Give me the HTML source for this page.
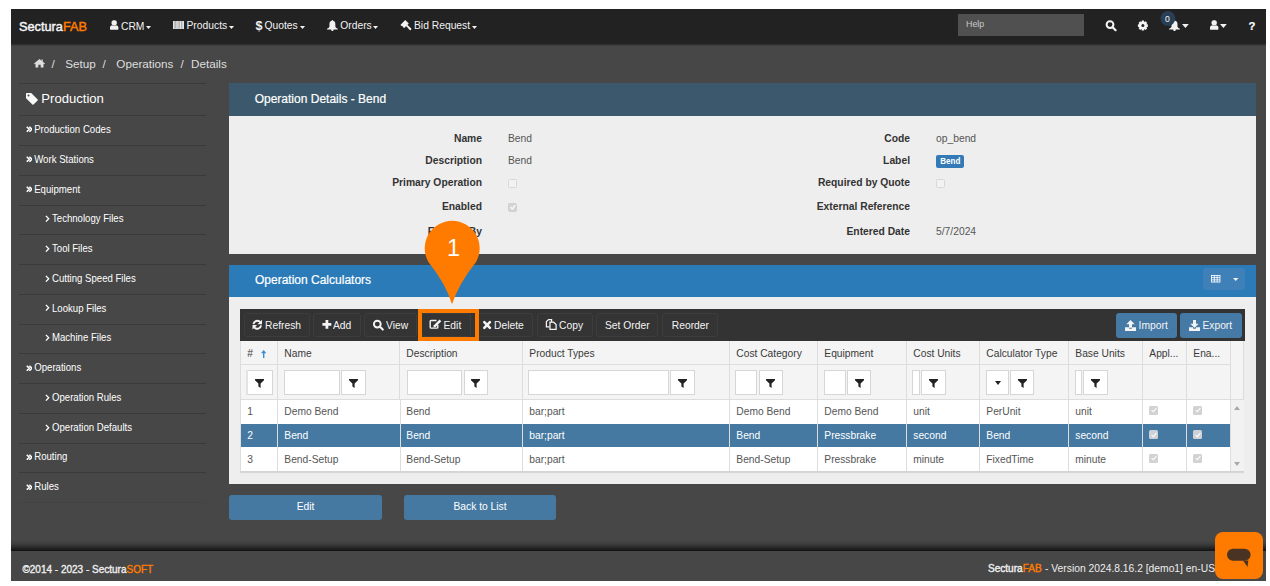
<!DOCTYPE html><html><head><meta charset="utf-8"><style>*{box-sizing:border-box;margin:0;padding:0}
html,body{width:1270px;height:586px;overflow:hidden;background:#fff;font-family:"Liberation Sans",sans-serif}
.a{position:absolute}
.t{position:absolute;white-space:nowrap}
</style></head><body>
<div class="a" style="left:11px;top:9px;width:1255px;height:572px;background:#474747;"></div>
<div class="a" style="left:11px;top:9px;width:1255px;height:35px;background:#222;"></div>
<div class="a" style="left:11px;top:44px;width:1255px;height:2px;background:linear-gradient(#2c2c2c,#424242);"></div>
<div class="t" style="left:19.00px;transform:scaleY(1.03);transform-origin:0 10px;-webkit-text-stroke:0.45px #f4f4f4;top:21px;font-size:12.75px;line-height:12.75px;color:#f4f4f4;">Sectura<span style="color:#ff7b00;-webkit-text-stroke:0.45px #ff7b00">FAB</span></div>
<svg class="a" style="left:110.1px;top:20.4px;" width="10" height="11" viewBox="0 0 10 11"><path d="M0 8.9V7.8Q0 5.3 2.6 5.3H5.8Q8.4 5.3 8.4 7.8V8.9Q8.4 9.8 7.4 9.8H1Q0 9.8 0 8.9Z" fill="#f2f2f2"/><circle cx="4.2" cy="2.8" r="3.05" fill="#555"/><circle cx="4.2" cy="2.8" r="2.6" fill="#f2f2f2"/></svg>
<div class="t" style="left:121.00px;top:22px;font-size:10.3px;line-height:10.3px;color:#f2f2f2;">CRM</div>
<svg class="a" style="left:145.5px;top:25.8px;" width="5" height="3" viewBox="0 0 5 3"><path d="M0 0H5L2.5 3Z" fill="#f2f2f2"/></svg>
<svg class="a" style="left:172.9px;top:20.8px;" width="11.2" height="8.6" viewBox="0 0 11.2 8.6"><rect width="11.2" height="8.6" fill="#cfcfcf"/><g fill="#a9a9a9"><rect x="1.6" width="1.2" height="7.4"/><rect x="5.8" width=".9" height="7.4"/><rect x="8.2" width=".8" height="7.4"/></g><g fill="#e4e4e4"><rect x="0" width="1" height="8.6"/><rect x="7" width="1" height="8.6"/><rect x="10" width="1.2" height="8.6"/></g></svg>
<div class="t" style="left:186.50px;top:21px;font-size:10.3px;line-height:10.3px;color:#f2f2f2;">Products</div>
<svg class="a" style="left:229px;top:25.6px;" width="5" height="3" viewBox="0 0 5 3"><path d="M0 0H5L2.5 3Z" fill="#f2f2f2"/></svg>
<div class="t" style="left:255.40px;transform:scaleY(1.08);transform-origin:0 10px;top:20px;font-size:12.6px;line-height:12.6px;color:#f2f2f2;font-weight:bold;">$</div>
<div class="t" style="left:264.50px;top:21px;font-size:10.3px;line-height:10.3px;color:#f2f2f2;">Quotes</div>
<svg class="a" style="left:300px;top:25.6px;" width="5" height="3" viewBox="0 0 5 3"><path d="M0 0H5L2.5 3Z" fill="#f2f2f2"/></svg>
<svg class="a" style="left:326.9px;top:19.7px;" width="10.8" height="11.3" viewBox="0 0 22 22.6"><path d="M11 0C10.2 0 9.6 .7 9.6 1.4C6.6 2 5 4.6 5 7.8V12.5C5 14.8 3 16.4 0 17.8V19.2H8.3C8.5 21 9.6 22.6 11 22.6C12.4 22.6 13.5 21 13.7 19.2H22V17.8C19 16.4 17 14.8 17 12.5V7.8C17 4.6 15.4 2 12.4 1.4C12.4 .7 11.8 0 11 0Z" fill="#f2f2f2"/></svg>
<div class="t" style="left:340.30px;top:21px;font-size:10.3px;line-height:10.3px;color:#f2f2f2;">Orders</div>
<svg class="a" style="left:373px;top:25.6px;" width="5" height="3" viewBox="0 0 5 3"><path d="M0 0H5L2.5 3Z" fill="#f2f2f2"/></svg>
<svg class="a" style="left:396px;top:16px;" width="20" height="18" viewBox="0 0 20 18"><g fill="#f2f2f2"><path d="M4.4 8.9L9.2 3.9L12.8 7.5L8 12.3L7.2 11.1Q6.6 10.3 5.7 10.1Z"/><path d="M9.6 9.6L11 8.4L15.3 12.6Q15.6 14.4 13.9 14.2Z"/></g></svg>
<div class="t" style="left:414.00px;top:21px;font-size:10.3px;line-height:10.3px;color:#f2f2f2;">Bid Request</div>
<svg class="a" style="left:472px;top:25.6px;" width="5" height="3" viewBox="0 0 5 3"><path d="M0 0H5L2.5 3Z" fill="#f2f2f2"/></svg>
<div class="a" style="left:958px;top:14px;width:126px;height:22px;background:#505050;"></div>
<div class="t" style="left:966.00px;top:20px;font-size:8.9px;line-height:8.9px;color:#c8c8c8;">Help</div>
<svg class="a" style="left:1100px;top:16px;" width="20" height="18" viewBox="0 0 20 18"><circle cx="10" cy="8.6" r="3.4" fill="none" stroke="#f5f5f5" stroke-width="2"/><path d="M12.6 11.2L15.6 14.2" stroke="#f5f5f5" stroke-width="2.2" stroke-linecap="round"/></svg>
<svg class="a" style="left:1136px;top:18px;" width="14" height="14" viewBox="0 0 14 14"><g fill="#f5f5f5" transform="translate(6.9 7.6)"><circle r="3.8"/><rect x="-1.3" y="-5" width="2.6" height="10" rx=".4"/><rect x="-1.3" y="-5" width="2.6" height="10" rx=".4" transform="rotate(45)"/><rect x="-1.3" y="-5" width="2.6" height="10" rx=".4" transform="rotate(90)"/><rect x="-1.3" y="-5" width="2.6" height="10" rx=".4" transform="rotate(135)"/><circle r="1.5" fill="#222"/></g></svg>
<svg class="a" style="left:1168.8px;top:19.8px;" width="11" height="11.2" viewBox="0 0 22 22.6"><path d="M11 0C10.2 0 9.6 .7 9.6 1.4C6.6 2 5 4.6 5 7.8V12.5C5 14.8 3 16.4 0 17.8V19.2H8.3C8.5 21 9.6 22.6 11 22.6C12.4 22.6 13.5 21 13.7 19.2H22V17.8C19 16.4 17 14.8 17 12.5V7.8C17 4.6 15.4 2 12.4 1.4C12.4 .7 11.8 0 11 0Z" fill="#f2f2f2"/></svg>
<svg class="a" style="left:1158px;top:9px;" width="20" height="20" viewBox="0 0 20 20"><circle cx="9.9" cy="9.4" r="7.4" fill="#283f56"/></svg>
<div class="t" style="left:1167.50px;transform:translateX(-50%) scaleY(1.12);transform-origin:50% 7px;top:15px;font-size:8.6px;line-height:8.6px;color:#f8f6ee;">0</div>
<svg class="a" style="left:1182.3px;top:23.8px;" width="6.8" height="3.9" viewBox="0 0 6.8 3.9"><path d="M0 0H6.8L3.4 3.9Z" fill="#f2f2f2"/></svg>
<svg class="a" style="left:1210.1px;top:20.3px;" width="10" height="11" viewBox="0 0 10 11"><path d="M0 8.9V7.8Q0 5.3 2.6 5.3H5.8Q8.4 5.3 8.4 7.8V8.9Q8.4 9.8 7.4 9.8H1Q0 9.8 0 8.9Z" fill="#f2f2f2"/><circle cx="4.2" cy="2.8" r="3.05" fill="#555"/><circle cx="4.2" cy="2.8" r="2.6" fill="#f2f2f2"/></svg>
<svg class="a" style="left:1220.4px;top:23.8px;" width="6.8" height="3.9" viewBox="0 0 6.8 3.9"><path d="M0 0H6.8L3.4 3.9Z" fill="#f2f2f2"/></svg>
<div class="t" style="left:1248.60px;-webkit-text-stroke:0.2px #fafafa;top:21px;font-size:11.3px;line-height:11.3px;color:#fafafa;font-weight:bold;">?</div>
<svg class="a" style="left:34px;top:59px;" width="11" height="8.5" viewBox="0 0 22 17"><path d="M11 0L0 9.2L1.3 10.6L3 9.2V17H8.6V11.6H13.4V17H19V9.2L20.7 10.6L22 9.2L17.5 5.4V1.2H15V3.3Z" fill="#dedede"/></svg>
<div class="t" style="left:51.50px;top:58px;font-size:11.7px;line-height:11.7px;color:#dedede;">/</div>
<div class="t" style="left:65.30px;top:58px;font-size:11.7px;line-height:11.7px;color:#dedede;">Setup</div>
<div class="t" style="left:102.50px;top:58px;font-size:11.7px;line-height:11.7px;color:#dedede;">/</div>
<div class="t" style="left:116.30px;top:58px;font-size:11.7px;line-height:11.7px;color:#dedede;">Operations</div>
<div class="t" style="left:180.50px;top:58px;font-size:11.7px;line-height:11.7px;color:#dedede;">/</div>
<div class="t" style="left:191.00px;top:58px;font-size:11.7px;line-height:11.7px;color:#dedede;">Details</div>
<div class="a" style="left:19px;top:83px;width:187px;height:1px;background:#3a3a3a;"></div>
<div class="a" style="left:19px;top:115px;width:187px;height:1px;background:#3a3a3a;"></div>
<div class="a" style="left:19px;top:145px;width:187px;height:1px;background:#3a3a3a;"></div>
<div class="a" style="left:19px;top:175px;width:187px;height:1px;background:#3a3a3a;"></div>
<div class="a" style="left:19px;top:205px;width:187px;height:1px;background:#3a3a3a;"></div>
<div class="a" style="left:19px;top:234px;width:187px;height:1px;background:#3a3a3a;"></div>
<div class="a" style="left:19px;top:264px;width:187px;height:1px;background:#3a3a3a;"></div>
<div class="a" style="left:19px;top:294px;width:187px;height:1px;background:#3a3a3a;"></div>
<div class="a" style="left:19px;top:324px;width:187px;height:1px;background:#3a3a3a;"></div>
<div class="a" style="left:19px;top:353px;width:187px;height:1px;background:#3a3a3a;"></div>
<div class="a" style="left:19px;top:383px;width:187px;height:1px;background:#3a3a3a;"></div>
<div class="a" style="left:19px;top:413px;width:187px;height:1px;background:#3a3a3a;"></div>
<div class="a" style="left:19px;top:443px;width:187px;height:1px;background:#3a3a3a;"></div>
<div class="a" style="left:19px;top:472px;width:187px;height:1px;background:#3a3a3a;"></div>
<div class="a" style="left:19px;top:502px;width:187px;height:1px;background:#434343;"></div>
<svg class="a" style="left:26px;top:93px;" width="12" height="11.5" viewBox="0 0 24 23"><path d="M0 1.5C0 .7 .7 0 1.5 0H10.5L23.3 12.8C23.9 13.4 23.9 14.3 23.3 14.9L15 23.2C14.4 23.8 13.5 23.8 12.9 23.2L0 10.4Z" fill="#f8f8f8"/><circle cx="5" cy="5" r="2" fill="#474747"/></svg>
<div class="t" style="left:41.30px;top:92px;font-size:13.1px;line-height:13.1px;color:#fff;">Production</div>
<svg class="a" style="left:25.7px;top:126.4px;" width="6.6" height="6.6" viewBox="0 0 6.6 6.6"><path d="M.8 .8L3.2 3.3L.8 5.8M3.4 .8L5.8 3.3L3.4 5.8" fill="none" stroke="#fff" stroke-width="1.6"/></svg>
<div class="t" style="left:34.20px;transform:scaleY(1.14);transform-origin:0 8px;top:125px;font-size:9.65px;line-height:9.65px;color:#fff;">Production Codes</div>
<svg class="a" style="left:25.7px;top:156.17000000000002px;" width="6.6" height="6.6" viewBox="0 0 6.6 6.6"><path d="M.8 .8L3.2 3.3L.8 5.8M3.4 .8L5.8 3.3L3.4 5.8" fill="none" stroke="#fff" stroke-width="1.6"/></svg>
<div class="t" style="left:34.20px;transform:scaleY(1.14);transform-origin:0 8px;top:155px;font-size:9.65px;line-height:9.65px;color:#fff;">Work Stations</div>
<svg class="a" style="left:25.7px;top:185.94000000000003px;" width="6.6" height="6.6" viewBox="0 0 6.6 6.6"><path d="M.8 .8L3.2 3.3L.8 5.8M3.4 .8L5.8 3.3L3.4 5.8" fill="none" stroke="#fff" stroke-width="1.6"/></svg>
<div class="t" style="left:34.20px;transform:scaleY(1.14);transform-origin:0 8px;top:185px;font-size:9.65px;line-height:9.65px;color:#fff;">Equipment</div>
<svg class="a" style="left:45px;top:215.11px;" width="5" height="7.5" viewBox="0 0 5 7.5"><path d="M.9 .9L3.7 3.75L.9 6.6" fill="none" stroke="#fff" stroke-width="1.35"/></svg>
<div class="t" style="left:52.00px;transform:scaleY(1.14);transform-origin:0 8px;top:214px;font-size:9.6px;line-height:9.6px;color:#fff;">Technology Files</div>
<svg class="a" style="left:45px;top:244.88000000000002px;" width="5" height="7.5" viewBox="0 0 5 7.5"><path d="M.9 .9L3.7 3.75L.9 6.6" fill="none" stroke="#fff" stroke-width="1.35"/></svg>
<div class="t" style="left:52.00px;transform:scaleY(1.14);transform-origin:0 8px;top:244px;font-size:9.6px;line-height:9.6px;color:#fff;">Tool Files</div>
<svg class="a" style="left:45px;top:274.65000000000003px;" width="5" height="7.5" viewBox="0 0 5 7.5"><path d="M.9 .9L3.7 3.75L.9 6.6" fill="none" stroke="#fff" stroke-width="1.35"/></svg>
<div class="t" style="left:52.00px;transform:scaleY(1.14);transform-origin:0 8px;top:274px;font-size:9.6px;line-height:9.6px;color:#fff;">Cutting Speed Files</div>
<svg class="a" style="left:45px;top:304.42px;" width="5" height="7.5" viewBox="0 0 5 7.5"><path d="M.9 .9L3.7 3.75L.9 6.6" fill="none" stroke="#fff" stroke-width="1.35"/></svg>
<div class="t" style="left:52.00px;transform:scaleY(1.14);transform-origin:0 8px;top:304px;font-size:9.6px;line-height:9.6px;color:#fff;">Lookup Files</div>
<svg class="a" style="left:45px;top:334.19px;" width="5" height="7.5" viewBox="0 0 5 7.5"><path d="M.9 .9L3.7 3.75L.9 6.6" fill="none" stroke="#fff" stroke-width="1.35"/></svg>
<div class="t" style="left:52.00px;transform:scaleY(1.14);transform-origin:0 8px;top:333px;font-size:9.6px;line-height:9.6px;color:#fff;">Machine Files</div>
<svg class="a" style="left:25.7px;top:364.56px;" width="6.6" height="6.6" viewBox="0 0 6.6 6.6"><path d="M.8 .8L3.2 3.3L.8 5.8M3.4 .8L5.8 3.3L3.4 5.8" fill="none" stroke="#fff" stroke-width="1.6"/></svg>
<div class="t" style="left:34.20px;transform:scaleY(1.14);transform-origin:0 8px;top:363px;font-size:9.65px;line-height:9.65px;color:#fff;">Operations</div>
<svg class="a" style="left:45px;top:393.73px;" width="5" height="7.5" viewBox="0 0 5 7.5"><path d="M.9 .9L3.7 3.75L.9 6.6" fill="none" stroke="#fff" stroke-width="1.35"/></svg>
<div class="t" style="left:52.00px;transform:scaleY(1.14);transform-origin:0 8px;top:393px;font-size:9.6px;line-height:9.6px;color:#fff;">Operation Rules</div>
<svg class="a" style="left:45px;top:423.5px;" width="5" height="7.5" viewBox="0 0 5 7.5"><path d="M.9 .9L3.7 3.75L.9 6.6" fill="none" stroke="#fff" stroke-width="1.35"/></svg>
<div class="t" style="left:52.00px;transform:scaleY(1.14);transform-origin:0 8px;top:423px;font-size:9.6px;line-height:9.6px;color:#fff;">Operation Defaults</div>
<svg class="a" style="left:25.7px;top:453.86999999999995px;" width="6.6" height="6.6" viewBox="0 0 6.6 6.6"><path d="M.8 .8L3.2 3.3L.8 5.8M3.4 .8L5.8 3.3L3.4 5.8" fill="none" stroke="#fff" stroke-width="1.6"/></svg>
<div class="t" style="left:34.20px;transform:scaleY(1.14);transform-origin:0 8px;top:452px;font-size:9.65px;line-height:9.65px;color:#fff;">Routing</div>
<svg class="a" style="left:25.7px;top:483.64px;" width="6.6" height="6.6" viewBox="0 0 6.6 6.6"><path d="M.8 .8L3.2 3.3L.8 5.8M3.4 .8L5.8 3.3L3.4 5.8" fill="none" stroke="#fff" stroke-width="1.6"/></svg>
<div class="t" style="left:34.20px;transform:scaleY(1.14);transform-origin:0 8px;top:482px;font-size:9.65px;line-height:9.65px;color:#fff;">Rules</div>
<div class="a" style="left:229px;top:83px;width:1027px;height:33px;background:#3b586c;"></div>
<div class="a" style="left:229px;top:116px;width:1027px;height:138px;background:#eeeeee;"></div>
<div class="t" style="left:254.70px;transform:scaleY(1.04);transform-origin:0 10px;-webkit-text-stroke:0.2px #fff;top:93px;font-size:12.0px;line-height:12.0px;color:#fff;">Operation Details - Bend</div>
<div class="t" style="right:788.00px;top:134px;font-size:10.3px;line-height:10.3px;color:#333;font-weight:bold;">Name</div>
<div class="t" style="left:508.00px;top:134px;font-size:10.3px;line-height:10.3px;color:#555;">Bend</div>
<div class="t" style="right:788.00px;top:156px;font-size:10.3px;line-height:10.3px;color:#333;font-weight:bold;">Description</div>
<div class="t" style="left:508.00px;top:156px;font-size:10.3px;line-height:10.3px;color:#555;">Bend</div>
<div class="t" style="right:788.00px;top:178px;font-size:10.3px;line-height:10.3px;color:#333;font-weight:bold;">Primary Operation</div>
<div class="t" style="right:788.00px;top:202px;font-size:10.3px;line-height:10.3px;color:#333;font-weight:bold;">Enabled</div>
<div class="t" style="right:788.00px;top:227px;font-size:10.3px;line-height:10.3px;color:#333;font-weight:bold;">Entered By</div>
<div class="a" style="left:508px;top:178.8px;width:9px;height:9px;background:#f2f2f2;border:1px solid #d8d8d8;border-radius:1.5px"></div>
<div class="a" style="left:508px;top:202.6px;width:9px;height:9px;background:#d5d5d5;border:1px solid #cfcfcf;border-radius:1.5px"></div>
<svg class="a" style="left:509.5px;top:204.1px;" width="6" height="6" viewBox="0 0 6 6"><path d="M.6 3.2L2.3 4.8L5.4 1.2" fill="none" stroke="#fff" stroke-width="1.2"/></svg>
<div class="t" style="right:360.00px;top:134px;font-size:10.3px;line-height:10.3px;color:#333;font-weight:bold;">Code</div>
<div class="t" style="left:936.00px;top:134px;font-size:10.3px;line-height:10.3px;color:#555;">op_bend</div>
<div class="t" style="right:360.00px;top:156px;font-size:10.3px;line-height:10.3px;color:#333;font-weight:bold;">Label</div>
<div class="t" style="right:360.00px;top:178px;font-size:10.3px;line-height:10.3px;color:#333;font-weight:bold;">Required by Quote</div>
<div class="t" style="right:360.00px;top:202px;font-size:10.3px;line-height:10.3px;color:#333;font-weight:bold;">External Reference</div>
<div class="t" style="right:360.00px;top:227px;font-size:10.3px;line-height:10.3px;color:#333;font-weight:bold;">Entered Date</div>
<div class="t" style="left:936.00px;top:227px;font-size:10.3px;line-height:10.3px;color:#555;">5/7/2024</div>
<div class="a" style="left:936px;top:155px;width:28px;height:13.4px;background:#337ab7;border-radius:2px"></div>
<div class="t" style="left:950.30px;transform:translateX(-50%) scaleY(1.22);transform-origin:50% 6px;top:158px;font-size:8.0px;line-height:8.0px;color:#fff;font-weight:bold;">Bend</div>
<div class="a" style="left:936px;top:179px;width:9px;height:9px;background:#f2f2f2;border:1px solid #d8d8d8;border-radius:1.5px"></div>
<div class="a" style="left:229px;top:265px;width:1027px;height:32px;background:#2a7bb8;"></div>
<div class="a" style="left:229px;top:297px;width:1027px;height:187px;background:#eeeeee;"></div>
<div class="t" style="left:255.00px;transform:scaleY(1.04);transform-origin:0 10px;-webkit-text-stroke:0.2px #fff;top:274px;font-size:12.0px;line-height:12.0px;color:#fff;">Operation Calculators</div>
<div class="a" style="left:1203px;top:268.4px;width:42px;height:22px;background:#3e80b7;border-radius:3px"></div>
<svg class="a" style="left:1211px;top:275px;" width="9.5" height="7.5" viewBox="0 0 10 8"><g fill="none" stroke="#fff" stroke-width=".9"><rect x=".5" y=".5" width="9" height="7"/><path d="M.5 2.8H9.5M.5 5.2H9.5M3.5 .5V7.5M6.5 .5V7.5"/></g></svg>
<svg class="a" style="left:1233px;top:278.3px;" width="5.5" height="3" viewBox="0 0 5.5 3"><path d="M0 0H5.5L2.75 3Z" fill="#f2f2f2"/></svg>
<div class="a" style="left:240px;top:309px;width:1005px;height:32px;background:#333;"></div>
<div class="a" style="left:243.5px;top:313px;width:66.5px;height:24px;background:#343434;border:1px solid #3d3d3d;border-radius:3px"></div>
<div class="a" style="left:313px;top:313px;width:48px;height:24px;background:#343434;border:1px solid #3d3d3d;border-radius:3px"></div>
<div class="a" style="left:363.7px;top:313px;width:53.5px;height:24px;background:#343434;border:1px solid #3d3d3d;border-radius:3px"></div>
<div class="a" style="left:421px;top:313px;width:50px;height:24px;background:#343434;border:1px solid #3d3d3d;border-radius:3px"></div>
<div class="a" style="left:475px;top:313px;width:57.700000000000045px;height:24px;background:#343434;border:1px solid #3d3d3d;border-radius:3px"></div>
<div class="a" style="left:537px;top:313px;width:55.60000000000002px;height:24px;background:#343434;border:1px solid #3d3d3d;border-radius:3px"></div>
<div class="a" style="left:595.6px;top:313px;width:62.89999999999998px;height:24px;background:#343434;border:1px solid #3d3d3d;border-radius:3px"></div>
<div class="a" style="left:662.4px;top:313px;width:56.0px;height:24px;background:#343434;border:1px solid #3d3d3d;border-radius:3px"></div>
<svg class="a" style="left:248px;top:315px;" width="20" height="20" viewBox="0 0 20 20"><g fill="none" stroke="#f4f4f4" stroke-width="1.9"><path d="M5.5 9.2A3.9 3.9 0 0 1 12.3 7.2"/><path d="M13.1 10.4A3.9 3.9 0 0 1 6.3 12.4"/></g><path d="M14 4.7V9.3H9.4Z" fill="#f4f4f4"/><path d="M4.5 14.6V10.1H9.1Z" fill="#f4f4f4"/></svg>
<div class="t" style="left:265.00px;transform:scaleY(1.1);transform-origin:0 8px;top:321px;font-size:10.3px;line-height:10.3px;color:#f4f4f4;">Refresh</div>
<svg class="a" style="left:318px;top:315px;" width="20" height="20" viewBox="0 0 20 20"><path d="M7.5 5.1H10.3V8H13.3V10.8H10.3V13.7H7.5V10.8H4.4V8H7.5Z" fill="#f4f4f4"/></svg>
<div class="t" style="left:333.00px;transform:scaleY(1.1);transform-origin:0 8px;top:321px;font-size:10.3px;line-height:10.3px;color:#f4f4f4;">Add</div>
<svg class="a" style="left:370px;top:315px;" width="20" height="20" viewBox="0 0 20 20"><circle cx="7.3" cy="9.1" r="3.4" fill="none" stroke="#f4f4f4" stroke-width="1.9"/><path d="M10 11.8L12.8 14.6" stroke="#f4f4f4" stroke-width="2.1" stroke-linecap="round"/></svg>
<div class="t" style="left:386.00px;transform:scaleY(1.1);transform-origin:0 8px;top:321px;font-size:10.3px;line-height:10.3px;color:#f4f4f4;">View</div>
<svg class="a" style="left:426px;top:315px;" width="20" height="20" viewBox="0 0 20 20"><path d="M10.5 5.5H5.2Q4.2 5.5 4.2 6.5V12.2Q4.2 13.1 5.2 13.1H10.9Q11.8 13.1 11.8 12.2V10" fill="none" stroke="#f4f4f4" stroke-width="1.4"/><path d="M13.6 4.6L15.3 6.3L9.6 12L7.4 12.5L7.9 10.3Z" fill="#f4f4f4"/></svg>
<div class="t" style="left:443.50px;transform:scaleY(1.1);transform-origin:0 8px;top:321px;font-size:10.3px;line-height:10.3px;color:#f4f4f4;">Edit</div>
<svg class="a" style="left:478px;top:315px;" width="20" height="20" viewBox="0 0 20 20"><path d="M6.3 7.2L11.9 12.8M11.9 7.2L6.3 12.8" stroke="#f4f4f4" stroke-width="2.6" stroke-linecap="round"/></svg>
<div class="t" style="left:494.00px;transform:scaleY(1.1);transform-origin:0 8px;top:321px;font-size:10.3px;line-height:10.3px;color:#f4f4f4;">Delete</div>
<svg class="a" style="left:542px;top:315px;" width="20" height="20" viewBox="0 0 20 20"><g fill="none" stroke="#f4f4f4" stroke-width="1.25"><path d="M7.6 11.8H4.4V6.6L6.6 4.6H9.6V7.2"/><path d="M8 7.2H11.6L14.1 9.6V14.4H8Z"/></g></svg>
<div class="t" style="left:559.00px;transform:scaleY(1.1);transform-origin:0 8px;top:321px;font-size:10.3px;line-height:10.3px;color:#f4f4f4;">Copy</div>
<div class="t" style="left:605.00px;transform:scaleY(1.1);transform-origin:0 8px;top:321px;font-size:10.3px;line-height:10.3px;color:#f4f4f4;">Set Order</div>
<div class="t" style="left:671.80px;transform:scaleY(1.1);transform-origin:0 8px;top:321px;font-size:10.3px;line-height:10.3px;color:#f4f4f4;">Reorder</div>
<div class="a" style="left:1116.4px;top:313px;width:61px;height:24.7px;background:#467aa6;border-radius:3px"></div>
<div class="a" style="left:1180px;top:313px;width:62px;height:24.7px;background:#467aa6;border-radius:3px"></div>
<svg class="a" style="left:1125.4px;top:319.5px;" width="11" height="11" viewBox="0 0 12 12"><path d="M6 0L10.5 4.5H7.6V8.5H4.4V4.5H1.5Z" fill="#f4f4f4"/><path d="M0 8H4.5V9.5H7.5V8H12V12H0Z" fill="#f4f4f4"/></svg>
<div class="t" style="left:1138.60px;transform:scaleY(1.1);transform-origin:0 8px;top:321px;font-size:10.3px;line-height:10.3px;color:#f4f4f4;">Import</div>
<svg class="a" style="left:1189.2px;top:319.5px;" width="11" height="11" viewBox="0 0 12 12"><path d="M4.4 0H7.6V4H10.5L6 8.5L1.5 4H4.4Z" fill="#f4f4f4"/><path d="M0 8H4.5V9.5H7.5V8H12V12H0Z" fill="#f4f4f4"/></svg>
<div class="t" style="left:1202.40px;transform:scaleY(1.1);transform-origin:0 8px;top:321px;font-size:10.3px;line-height:10.3px;color:#f4f4f4;">Export</div>
<div class="a" style="left:417.8px;top:309px;width:61.3px;height:31.5px;background:transparent;border:4px solid #ff7b00"></div>
<div class="a" style="left:240px;top:341px;width:1004px;height:131px;background:#f4f4f4;border-left:1px solid #ddd;border-right:1px solid #ddd"></div>
<div class="a" style="left:240px;top:364px;width:990px;height:1px;background:#dddddd;"></div>
<div class="a" style="left:240px;top:399px;width:1004px;height:1px;background:#dddddd;"></div>
<div class="a" style="left:241px;top:400px;width:989px;height:23.5px;background:#fff;"></div>
<div class="a" style="left:241px;top:423.5px;width:989px;height:23.5px;background:#4579a2;"></div>
<div class="a" style="left:241px;top:447px;width:989px;height:24.5px;background:#fff;"></div>
<div class="a" style="left:240px;top:471px;width:1004px;height:1px;background:#d4d4d4;box-shadow:0 1px 1px rgba(0,0,0,.12)"></div>
<div class="a" style="left:1230px;top:400px;width:14px;height:71px;background:#f2f2f2;border-left:1px solid #e2e2e2"></div>
<div class="a" style="left:277px;top:341px;width:1px;height:130px;background:#dddddd;"></div>
<div class="a" style="left:399px;top:341px;width:1px;height:59px;background:#dddddd;"></div>
<div class="a" style="left:400px;top:400px;width:1px;height:71px;background:#dddddd;"></div>
<div class="a" style="left:522px;top:341px;width:1px;height:130px;background:#dddddd;"></div>
<div class="a" style="left:729px;top:341px;width:1px;height:130px;background:#dddddd;"></div>
<div class="a" style="left:817px;top:341px;width:1px;height:130px;background:#dddddd;"></div>
<div class="a" style="left:906px;top:341px;width:1px;height:130px;background:#dddddd;"></div>
<div class="a" style="left:979px;top:341px;width:1px;height:130px;background:#dddddd;"></div>
<div class="a" style="left:1068px;top:341px;width:1px;height:130px;background:#dddddd;"></div>
<div class="a" style="left:1142px;top:341px;width:1px;height:130px;background:#dddddd;"></div>
<div class="a" style="left:1186px;top:341px;width:1px;height:130px;background:#dddddd;"></div>
<div class="a" style="left:1230px;top:341px;width:1px;height:130px;background:#dddddd;"></div>
<div class="t" style="left:247.30px;top:349px;font-size:10.25px;line-height:10.25px;color:#3a3a3a;">#</div>
<div class="t" style="left:284.30px;top:349px;font-size:10.25px;line-height:10.25px;color:#3a3a3a;">Name</div>
<div class="t" style="left:406.30px;top:349px;font-size:10.25px;line-height:10.25px;color:#3a3a3a;">Description</div>
<div class="t" style="left:529.30px;top:349px;font-size:10.25px;line-height:10.25px;color:#3a3a3a;">Product Types</div>
<div class="t" style="left:736.30px;top:349px;font-size:10.25px;line-height:10.25px;color:#3a3a3a;">Cost Category</div>
<div class="t" style="left:824.30px;top:349px;font-size:10.25px;line-height:10.25px;color:#3a3a3a;">Equipment</div>
<div class="t" style="left:913.30px;top:349px;font-size:10.25px;line-height:10.25px;color:#3a3a3a;">Cost Units</div>
<div class="t" style="left:986.30px;top:349px;font-size:10.25px;line-height:10.25px;color:#3a3a3a;">Calculator Type</div>
<div class="t" style="left:1075.30px;top:349px;font-size:10.25px;line-height:10.25px;color:#3a3a3a;">Base Units</div>
<div class="t" style="left:1149.30px;top:349px;font-size:10.25px;line-height:10.25px;color:#3a3a3a;">Appl...</div>
<div class="t" style="left:1193.30px;top:349px;font-size:10.25px;line-height:10.25px;color:#3a3a3a;">Ena...</div>
<svg class="a" style="left:260.7px;top:349.8px;" width="5.4" height="8.2" viewBox="0 0 5.4 8.2"><path d="M2.7 0L5.4 3.2H3.4V8.2H2V3.2H0Z" fill="#3d8bd3"/></svg>
<div class="a" style="left:246.6px;top:370px;width:26.099999999999994px;height:24.7px;background:#fff;border:1px solid #d6d6d6"></div>
<svg class="a" style="left:255.14999999999998px;top:378.5px;" width="9" height="9" viewBox="0 0 9 9"><path d="M0 0H9V1.3L5.6 4.6V9L3.4 7.6V4.6L0 1.3Z" fill="#222"/></svg>
<div class="a" style="left:246px;top:370px;width:1.5px;height:24.7px;background:#e3e3e3;"></div>
<div class="a" style="left:284px;top:370px;width:55.60000000000002px;height:24.7px;background:#fff;border:1px solid #d6d6d6"></div>
<div class="a" style="left:341.2px;top:370px;width:24.400000000000034px;height:24.7px;background:#fff;border:1px solid #d6d6d6"></div>
<svg class="a" style="left:348.9px;top:378.5px;" width="9" height="9" viewBox="0 0 9 9"><path d="M0 0H9V1.3L5.6 4.6V9L3.4 7.6V4.6L0 1.3Z" fill="#222"/></svg>
<div class="a" style="left:406.6px;top:370px;width:55.0px;height:24.7px;background:#fff;border:1px solid #d6d6d6"></div>
<div class="a" style="left:463.5px;top:370px;width:24.100000000000023px;height:24.7px;background:#fff;border:1px solid #d6d6d6"></div>
<svg class="a" style="left:471.05px;top:378.5px;" width="9" height="9" viewBox="0 0 9 9"><path d="M0 0H9V1.3L5.6 4.6V9L3.4 7.6V4.6L0 1.3Z" fill="#222"/></svg>
<div class="a" style="left:528.4px;top:370px;width:140.20000000000005px;height:24.7px;background:#fff;border:1px solid #d6d6d6"></div>
<div class="a" style="left:670px;top:370px;width:24.600000000000023px;height:24.7px;background:#fff;border:1px solid #d6d6d6"></div>
<svg class="a" style="left:677.8px;top:378.5px;" width="9" height="9" viewBox="0 0 9 9"><path d="M0 0H9V1.3L5.6 4.6V9L3.4 7.6V4.6L0 1.3Z" fill="#222"/></svg>
<div class="a" style="left:735.4px;top:370px;width:21.899999999999977px;height:24.7px;background:#fff;border:1px solid #d6d6d6"></div>
<div class="a" style="left:758.6px;top:370px;width:24.199999999999932px;height:24.7px;background:#fff;border:1px solid #d6d6d6"></div>
<svg class="a" style="left:766.2px;top:378.5px;" width="9" height="9" viewBox="0 0 9 9"><path d="M0 0H9V1.3L5.6 4.6V9L3.4 7.6V4.6L0 1.3Z" fill="#222"/></svg>
<div class="a" style="left:824px;top:370px;width:21.5px;height:24.7px;background:#fff;border:1px solid #d6d6d6"></div>
<div class="a" style="left:847.3px;top:370px;width:24.200000000000045px;height:24.7px;background:#fff;border:1px solid #d6d6d6"></div>
<svg class="a" style="left:854.9px;top:378.5px;" width="9" height="9" viewBox="0 0 9 9"><path d="M0 0H9V1.3L5.6 4.6V9L3.4 7.6V4.6L0 1.3Z" fill="#222"/></svg>
<div class="a" style="left:912.4px;top:370px;width:7.2000000000000455px;height:24.7px;background:#fff;border:1px solid #d6d6d6"></div>
<div class="a" style="left:921.2px;top:370px;width:24.399999999999977px;height:24.7px;background:#fff;border:1px solid #d6d6d6"></div>
<svg class="a" style="left:928.9000000000001px;top:378.5px;" width="9" height="9" viewBox="0 0 9 9"><path d="M0 0H9V1.3L5.6 4.6V9L3.4 7.6V4.6L0 1.3Z" fill="#222"/></svg>
<div class="a" style="left:986.4px;top:370px;width:23.100000000000023px;height:24.7px;background:#fff;border:1px solid #d6d6d6"></div>
<div class="a" style="left:1009.7px;top:370px;width:24.59999999999991px;height:24.7px;background:#fff;border:1px solid #d6d6d6"></div>
<svg class="a" style="left:1017.5px;top:378.5px;" width="9" height="9" viewBox="0 0 9 9"><path d="M0 0H9V1.3L5.6 4.6V9L3.4 7.6V4.6L0 1.3Z" fill="#222"/></svg>
<svg class="a" style="left:994.8px;top:381px;" width="6" height="4" viewBox="0 0 6 4"><path d="M0 0H6L3 4Z" fill="#222"/></svg>
<div class="a" style="left:1075.2px;top:370px;width:6.599999999999909px;height:24.7px;background:#fff;border:1px solid #d6d6d6"></div>
<div class="a" style="left:1083.2px;top:370px;width:24.59999999999991px;height:24.7px;background:#fff;border:1px solid #d6d6d6"></div>
<svg class="a" style="left:1091.0px;top:378.5px;" width="9" height="9" viewBox="0 0 9 9"><path d="M0 0H9V1.3L5.6 4.6V9L3.4 7.6V4.6L0 1.3Z" fill="#222"/></svg>
<div class="t" style="left:247.30px;top:407px;font-size:10.25px;line-height:10.25px;color:#555;">1</div>
<div class="t" style="left:284.30px;top:407px;font-size:10.25px;line-height:10.25px;color:#555;">Demo Bend</div>
<div class="t" style="left:406.30px;top:407px;font-size:10.25px;line-height:10.25px;color:#555;">Bend</div>
<div class="t" style="left:529.30px;top:407px;font-size:10.25px;line-height:10.25px;color:#555;">bar;part</div>
<div class="t" style="left:736.30px;top:407px;font-size:10.25px;line-height:10.25px;color:#555;">Demo Bend</div>
<div class="t" style="left:824.30px;top:407px;font-size:10.25px;line-height:10.25px;color:#555;">Demo Bend</div>
<div class="t" style="left:913.30px;top:407px;font-size:10.25px;line-height:10.25px;color:#555;">unit</div>
<div class="t" style="left:986.30px;top:407px;font-size:10.25px;line-height:10.25px;color:#555;">PerUnit</div>
<div class="t" style="left:1075.30px;top:407px;font-size:10.25px;line-height:10.25px;color:#555;">unit</div>
<div class="a" style="left:1149.3px;top:406.1px;width:8.7px;height:8.7px;background:#d2d2d2;border-radius:1.5px"></div>
<svg class="a" style="left:1150.6px;top:407.4px;" width="6" height="6" viewBox="0 0 6 6"><path d="M.6 3.2L2.3 4.8L5.4 1.2" fill="none" stroke="#fff" stroke-width="1.1"/></svg>
<div class="a" style="left:1193.4px;top:406.1px;width:8.7px;height:8.7px;background:#d2d2d2;border-radius:1.5px"></div>
<svg class="a" style="left:1194.7px;top:407.4px;" width="6" height="6" viewBox="0 0 6 6"><path d="M.6 3.2L2.3 4.8L5.4 1.2" fill="none" stroke="#fff" stroke-width="1.1"/></svg>
<div class="t" style="left:247.30px;top:431px;font-size:10.25px;line-height:10.25px;color:#fff;">2</div>
<div class="t" style="left:284.30px;top:431px;font-size:10.25px;line-height:10.25px;color:#fff;">Bend</div>
<div class="t" style="left:406.30px;top:431px;font-size:10.25px;line-height:10.25px;color:#fff;">Bend</div>
<div class="t" style="left:529.30px;top:431px;font-size:10.25px;line-height:10.25px;color:#fff;">bar;part</div>
<div class="t" style="left:736.30px;top:431px;font-size:10.25px;line-height:10.25px;color:#fff;">Bend</div>
<div class="t" style="left:824.30px;top:431px;font-size:10.25px;line-height:10.25px;color:#fff;">Pressbrake</div>
<div class="t" style="left:913.30px;top:431px;font-size:10.25px;line-height:10.25px;color:#fff;">second</div>
<div class="t" style="left:986.30px;top:431px;font-size:10.25px;line-height:10.25px;color:#fff;">Bend</div>
<div class="t" style="left:1075.30px;top:431px;font-size:10.25px;line-height:10.25px;color:#fff;">second</div>
<div class="a" style="left:1149.3px;top:430.20000000000005px;width:8.7px;height:8.7px;background:#cdd1d5;border-radius:1.5px"></div>
<svg class="a" style="left:1150.6px;top:431.5px;" width="6" height="6" viewBox="0 0 6 6"><path d="M.6 3.2L2.3 4.8L5.4 1.2" fill="none" stroke="#fff" stroke-width="1.1"/></svg>
<div class="a" style="left:1193.4px;top:430.20000000000005px;width:8.7px;height:8.7px;background:#cdd1d5;border-radius:1.5px"></div>
<svg class="a" style="left:1194.7px;top:431.5px;" width="6" height="6" viewBox="0 0 6 6"><path d="M.6 3.2L2.3 4.8L5.4 1.2" fill="none" stroke="#fff" stroke-width="1.1"/></svg>
<div class="t" style="left:247.30px;top:455px;font-size:10.25px;line-height:10.25px;color:#555;">3</div>
<div class="t" style="left:284.30px;top:455px;font-size:10.25px;line-height:10.25px;color:#555;">Bend-Setup</div>
<div class="t" style="left:406.30px;top:455px;font-size:10.25px;line-height:10.25px;color:#555;">Bend-Setup</div>
<div class="t" style="left:529.30px;top:455px;font-size:10.25px;line-height:10.25px;color:#555;">bar;part</div>
<div class="t" style="left:736.30px;top:455px;font-size:10.25px;line-height:10.25px;color:#555;">Bend-Setup</div>
<div class="t" style="left:824.30px;top:455px;font-size:10.25px;line-height:10.25px;color:#555;">Pressbrake</div>
<div class="t" style="left:913.30px;top:455px;font-size:10.25px;line-height:10.25px;color:#555;">minute</div>
<div class="t" style="left:986.30px;top:455px;font-size:10.25px;line-height:10.25px;color:#555;">FixedTime</div>
<div class="t" style="left:1075.30px;top:455px;font-size:10.25px;line-height:10.25px;color:#555;">minute</div>
<div class="a" style="left:1149.3px;top:454.1px;width:8.7px;height:8.7px;background:#d2d2d2;border-radius:1.5px"></div>
<svg class="a" style="left:1150.6px;top:455.4px;" width="6" height="6" viewBox="0 0 6 6"><path d="M.6 3.2L2.3 4.8L5.4 1.2" fill="none" stroke="#fff" stroke-width="1.1"/></svg>
<div class="a" style="left:1193.4px;top:454.1px;width:8.7px;height:8.7px;background:#d2d2d2;border-radius:1.5px"></div>
<svg class="a" style="left:1194.7px;top:455.4px;" width="6" height="6" viewBox="0 0 6 6"><path d="M.6 3.2L2.3 4.8L5.4 1.2" fill="none" stroke="#fff" stroke-width="1.1"/></svg>
<svg class="a" style="left:1234px;top:405.5px;" width="6" height="4" viewBox="0 0 6 4"><path d="M0 4H6L3 0Z" fill="#a8a8a8"/></svg>
<svg class="a" style="left:1234px;top:462px;" width="6" height="4" viewBox="0 0 6 4"><path d="M0 0H6L3 4Z" fill="#a8a8a8"/></svg>
<div class="a" style="left:229px;top:495px;width:153px;height:25px;background:#4679a2;border-radius:3px"></div>
<div class="t" style="left:305.50px;transform:translateX(-50%);transform-origin:50% 8px;top:502px;font-size:10.3px;line-height:10.3px;color:#fff;">Edit</div>
<div class="a" style="left:404px;top:495px;width:152px;height:25px;background:#4679a2;border-radius:3px"></div>
<div class="t" style="left:480.00px;transform:translateX(-50%);transform-origin:50% 8px;top:502px;font-size:10.3px;line-height:10.3px;color:#fff;">Back to List</div>
<svg class="a" style="left:420px;top:218px;" width="66" height="90" viewBox="0 0 66 90"><path d="M32 86.3Q26 66 8.2 43.7A27.5 27.5 0 1 1 56.2 43.7Q38.5 66 32 86.3Z" fill="#ff7b00"/></svg>
<div class="t" style="left:453.60px;transform:translateX(-50%);transform-origin:50% 19px;top:237px;font-size:23.5px;line-height:23.5px;color:#fff;">1</div>
<div class="a" style="left:11px;top:540px;width:1255px;height:10.5px;background:linear-gradient(rgba(0,0,0,0) 0%,rgba(0,0,0,.12) 35%,rgba(0,0,0,.45) 70%,rgba(0,0,0,.76) 100%);"></div>
<div class="t" style="left:22.40px;-webkit-text-stroke:0.35px #eee;top:565px;font-size:10.0px;line-height:10.0px;color:#eee;">&copy;2014 - 2023 - Sectura<span style="color:#ff7b00;-webkit-text-stroke:0.35px #ff7b00">SOFT</span></div>
<div class="t" style="left:988.00px;-webkit-text-stroke:0.4px #eee;top:564px;font-size:10.05px;line-height:10.05px;color:#eee;">Sectura<span style="color:#ff7b00;-webkit-text-stroke:0.4px #ff7b00">FAB</span></div>
<div class="t" style="left:1045.00px;top:564px;font-size:10.3px;line-height:10.3px;color:#eee;">- Version 2024.8.16.2 [demo1] en-US</div>
<div class="a" style="left:1215.2px;top:532px;width:47.5px;height:47.3px;background:#ff7b00;border-radius:8px"></div>
<svg class="a" style="left:1226px;top:548px;" width="26" height="20" viewBox="0 0 26 20"><rect x="1" y=".7" width="23.6" height="12" rx="6" fill="#4a3322"/><path d="M17 12.5H22.3L21.5 19Z" fill="#4a3322"/></svg>
</body></html>
